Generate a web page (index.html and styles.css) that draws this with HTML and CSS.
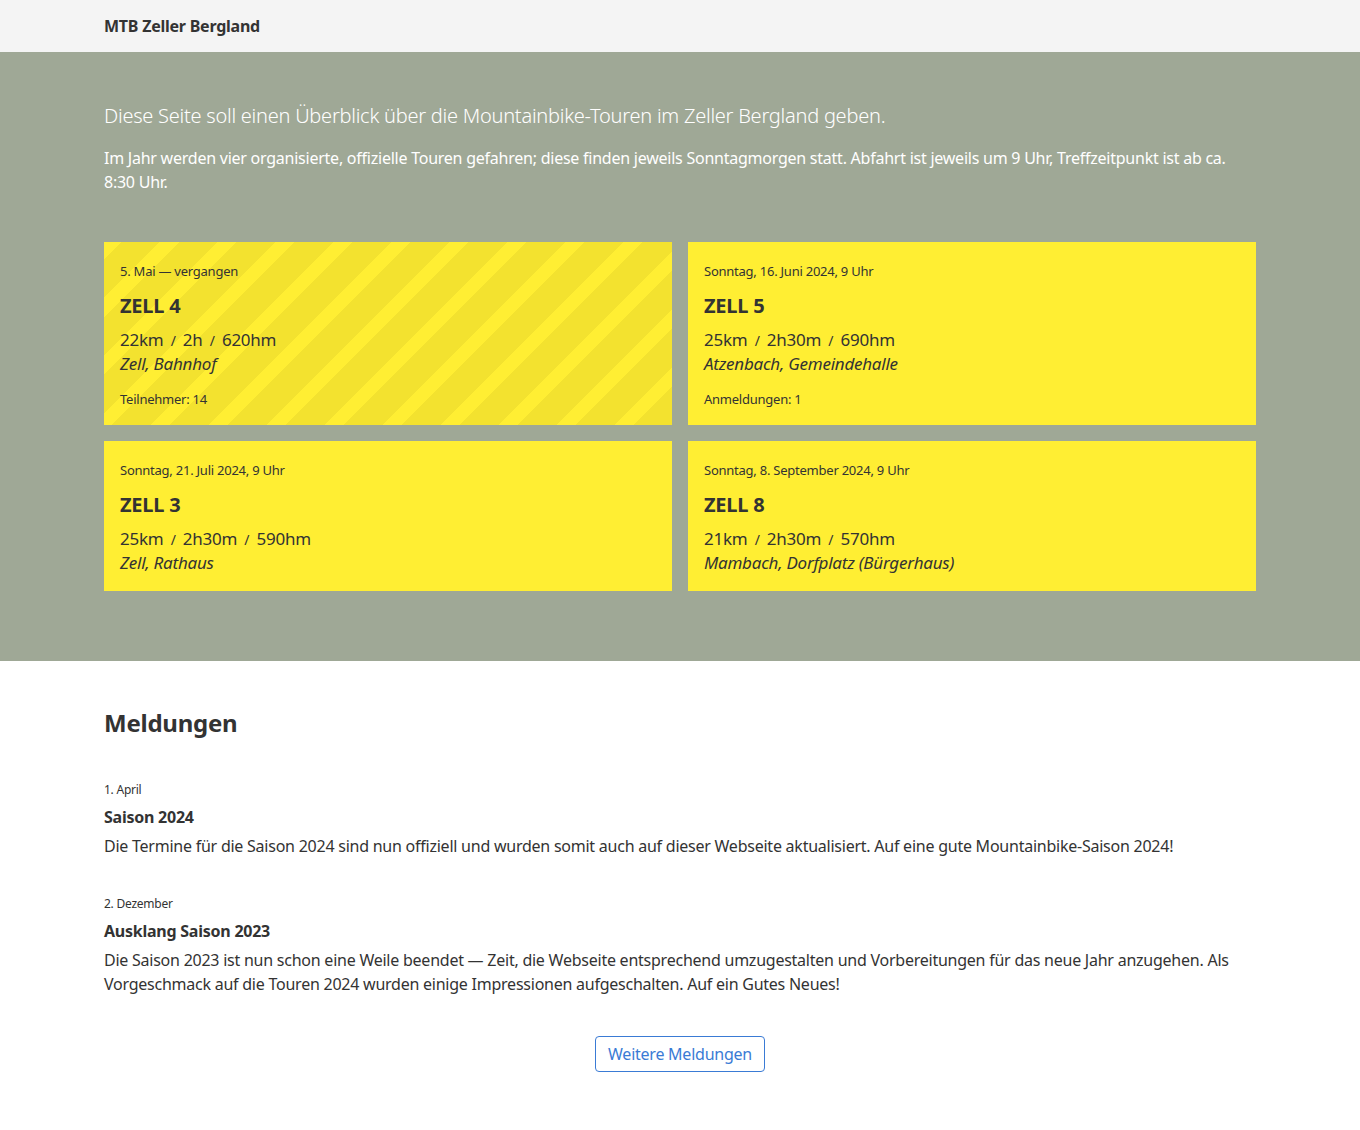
FILE: index.html
```html
<!DOCTYPE html>
<html lang="de">
<head>
    <meta charset="UTF-8">
    <meta name="viewport" content="width=device-width, initial-scale=1.0">
    <title>MTB Zeller Bergland</title>
    <link rel="stylesheet" href="styles.css">
</head>
<body>
  <header class="topbar">
    <div class="container">
      <a class="brand" href="#">MTB Zeller Bergland</a>
    </div>
  </header>

  <section class="hero">
    <div class="container">
      <p class="lead">Diese Seite soll einen Überblick über die Mountainbike-Touren im Zeller Bergland geben.</p>
      <p class="intro">Im Jahr werden vier organisierte, offizielle Touren gefahren; diese finden jeweils Sonntagmorgen statt. Abfahrt ist jeweils um 9 Uhr, Treffzeitpunkt ist ab ca. 8:30 Uhr.</p>

      <div class="tours">
        <div class="tour past">
          <div class="tour-date">5. Mai — vergangen</div>
          <h2 class="tour-name">ZELL 4</h2>
          <div class="tour-stats">22km <span class="sep">/</span> 2h <span class="sep">/</span> 620hm</div>
          <div class="tour-place">Zell, Bahnhof</div>
          <div class="tour-count">Teilnehmer: 14</div>
        </div>
        <div class="tour">
          <div class="tour-date">Sonntag, 16. Juni 2024, 9 Uhr</div>
          <h2 class="tour-name">ZELL 5</h2>
          <div class="tour-stats">25km <span class="sep">/</span> 2h30m <span class="sep">/</span> 690hm</div>
          <div class="tour-place">Atzenbach, Gemeindehalle</div>
          <div class="tour-count">Anmeldungen: 1</div>
        </div>
        <div class="tour">
          <div class="tour-date">Sonntag, 21. Juli 2024, 9 Uhr</div>
          <h2 class="tour-name">ZELL 3</h2>
          <div class="tour-stats">25km <span class="sep">/</span> 2h30m <span class="sep">/</span> 590hm</div>
          <div class="tour-place">Zell, Rathaus</div>
        </div>
        <div class="tour">
          <div class="tour-date">Sonntag, 8. September 2024, 9 Uhr</div>
          <h2 class="tour-name">ZELL 8</h2>
          <div class="tour-stats">21km <span class="sep">/</span> 2h30m <span class="sep">/</span> 570hm</div>
          <div class="tour-place">Mambach, Dorfplatz (Bürgerhaus)</div>
        </div>
      </div>
    </div>
  </section>

  <section class="news">
    <div class="container">
      <h1>Meldungen</h1>

      <article class="post">
        <div class="post-date">1. April</div>
        <h3>Saison 2024</h3>
        <p>Die Termine für die Saison 2024 sind nun offiziell und wurden somit auch auf dieser Webseite aktualisiert. Auf eine gute Mountainbike-Saison 2024!</p>
      </article>

      <article class="post">
        <div class="post-date">2. Dezember</div>
        <h3>Ausklang Saison 2023</h3>
        <p>Die Saison 2023 ist nun schon eine Weile beendet — Zeit, die Webseite entsprechend umzugestalten und Vorbereitungen für das neue Jahr anzugehen. Als Vorgeschmack auf die Touren 2024 wurden einige Impressionen aufgeschalten. Auf ein Gutes Neues!</p>
      </article>

      <div class="more">
        <a class="btn" href="#">Weitere Meldungen</a>
      </div>
    </div>
  </section>
</body>
</html>
```

FILE: styles.css
```css
body {
    margin: 0;
    font-family: "Noto Sans", sans-serif;
    font-size: 16px;
    line-height: 24px;
    letter-spacing: -0.015em;
    color: #333;
    background-color: #fff;
}
.container {
    max-width: 1152px;
    margin: 0 auto;
}
.topbar {
    background-color: #f4f4f4;
    height: 52px;
    display: flex;
    align-items: center;
}
.topbar .container {
    width: 1152px;
}
.brand {
    font-weight: bold;
    color: #333;
    text-decoration: none;
}
.hero {
    background-color: #9fa896;
    padding: 50px 0 70px;
}
.lead {
    color: #fff;
    font-size: 20px;
    font-weight: 300;
    line-height: 28px;
    margin: 0 0 16px;
}
.intro {
    color: #fff;
    margin: 0 0 48px;
}
.tours {
    display: grid;
    grid-template-columns: 1fr 1fr;
    gap: 16px;
}
.tour {
    background-color: #ffee33;
    padding: 20px 16px 16px;
}
.tour.past {
    background: repeating-linear-gradient(-45deg, #f3e22f 0, #f3e22f 27px, #ffee33 27px, #ffee33 41px);
}
.tour-date {
    font-size: 13px;
    line-height: 18px;
}
.tour-name {
    font-size: 20px;
    line-height: 28px;
    margin: 12px 0 8px;
}
.tour-stats {
    font-size: 17px;
}
.sep {
    margin: 0 3px;
    font-size: 14px;
    line-height: 1;
}
.tour-place {
    font-size: 17px;
    font-style: italic;
}
.tour-count {
    font-size: 13px;
    line-height: 20px;
    margin-top: 13px;
}
.news {
    padding: 50px 0 60px;
}
.news h1 {
    font-size: 24px;
    line-height: 24px;
    margin: 0 0 46px;
}
.post {
    margin-bottom: 37px;
}
.post-date {
    font-size: 12px;
    line-height: 18px;
}
.post h3 {
    font-size: 16px;
    margin: 6px 0 5px;
}
.post p {
    margin: 0;
}
.more {
    text-align: center;
    margin-top: 40px;
}
.btn {
    display: inline-block;
    padding: 5px 12px;
    border: 1px solid #3a7bd5;
    border-radius: 4px;
    color: #3a7bd5;
    text-decoration: none;
}
```
